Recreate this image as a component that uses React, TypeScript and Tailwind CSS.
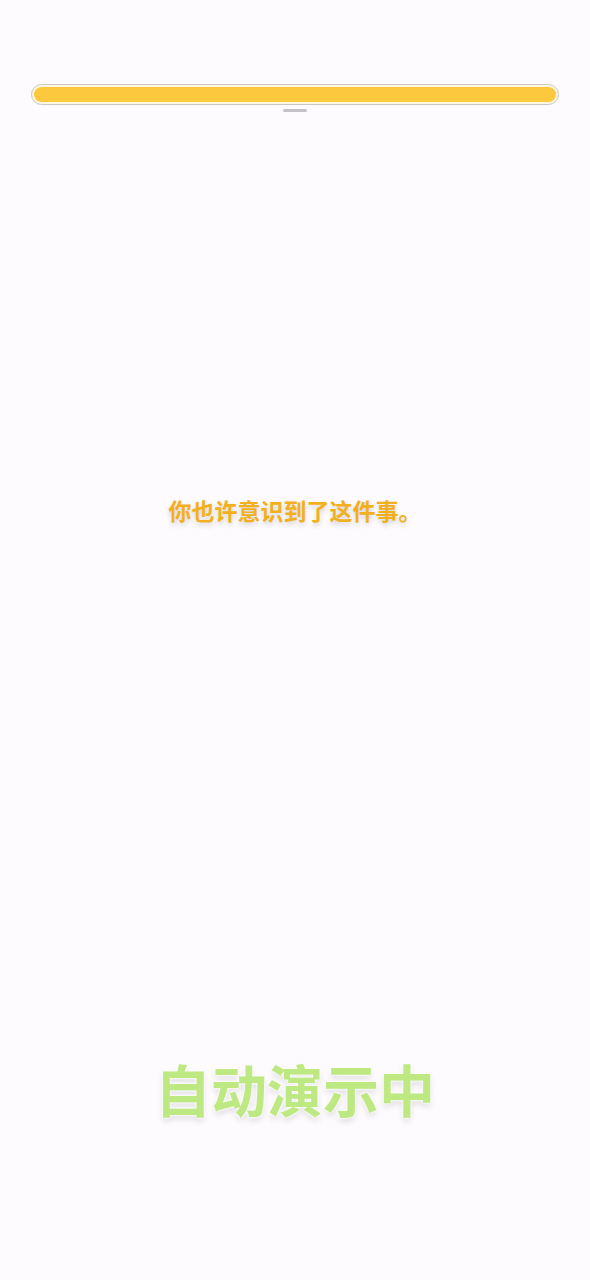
export default function App() {
  return (
    <div className="flex h-[1280px] w-[590px] flex-col items-center bg-[#fdfbfd] font-['Noto_Sans_CJK_SC',sans-serif]">
      {/* progress bar */}
      <div className="mt-[84px] w-[528px] rounded-full border border-[#c9c6c4] bg-[#fff8df] p-[2px]">
        <div className="h-[15px] w-full rounded-full bg-[#fcc83e]" />
      </div>
      <div className="mt-[4px] h-[3px] w-[24px] rounded-full bg-[#c4c2c6]" />

      <p className="mt-[383px] text-[23px] font-bold leading-[30px] text-[#f2b01e] [text-shadow:0_3px_5px_rgba(0,0,0,0.16)]">
        你也许意识到了这件事。
      </p>

      <p className="mt-[528px] text-[56px] font-bold leading-[70px] text-[#bde882] [text-shadow:0_0_3px_#fff,0_0_3px_#fff,0_4px_6px_rgba(0,0,0,0.12)]">
        自动演示中
      </p>
    </div>
  );
}
